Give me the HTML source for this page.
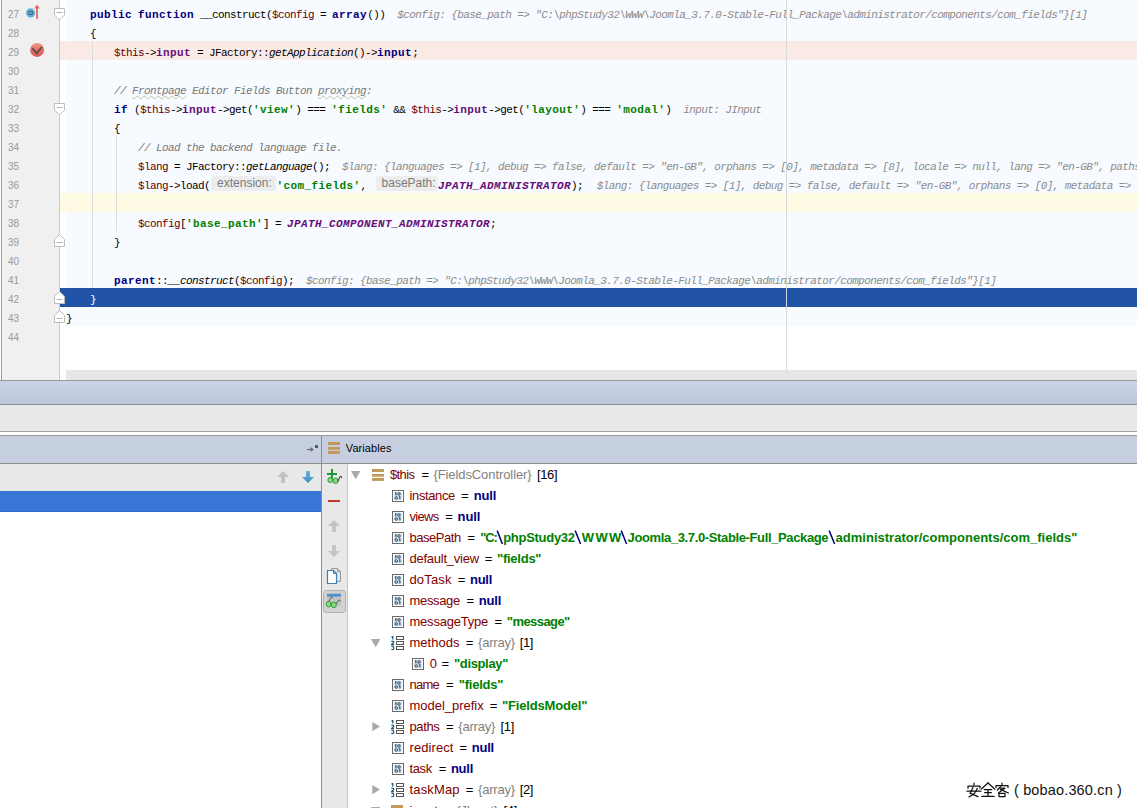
<!DOCTYPE html><html><head><meta charset="utf-8"><title>debug</title><style>
*{margin:0;padding:0;box-sizing:border-box}
html,body{width:1137px;height:808px;overflow:hidden;background:#fff}
body{position:relative;font-family:"Liberation Sans",sans-serif}
.a{position:absolute}
.cl{position:absolute;left:66px;height:19px;line-height:19px;white-space:pre;font-family:"Liberation Mono",monospace;font-size:11.0px;letter-spacing:-0.60px;color:#000}

.k{font-weight:bold;color:#000080;letter-spacing:0.40px}
.v{color:#660000}
.f{font-weight:bold;color:#660e7a;letter-spacing:0.40px}
.s{font-weight:bold;color:#008000;letter-spacing:0.40px}
.c{font-weight:bold;font-style:italic;color:#660e7a;letter-spacing:0.40px}
.m{font-style:italic}
.h{font-style:italic;color:#8c8c8c}
.cm{font-style:italic;color:#787878}
.w{color:#fff}
.ty{text-decoration:underline wavy #b4cca8;text-decoration-thickness:0.8px;text-underline-offset:0.5px;text-decoration-skip-ink:none}
.pbw{display:inline-block;position:relative;height:1px;vertical-align:baseline}
.pb{position:absolute;left:0;top:-12px;height:15px;line-height:15px;background:#ededed;border-radius:3px;font-family:"Liberation Sans",sans-serif;font-size:12px;letter-spacing:0;color:#7a7a7a;overflow:hidden}
.t{position:absolute;white-space:pre}
.nam{color:#800000} .blk{color:#000} .typ{color:#7f7f7f} .nul{color:#000080;font-weight:bold} .str{color:#008000;font-weight:bold} .esc{color:#000080;font-weight:bold}
.ln{position:absolute;left:2px;width:17px;text-align:right;font-size:10px;line-height:19px;height:19px;color:#999}
</style></head><body>
<div class="a" style="left:0;top:0;width:1137px;height:380px;background:#fff"></div>
<div class="a" style="left:1px;top:0;width:1px;height:380px;background:#9a9a9a"></div>
<div class="a" style="left:2px;top:0;width:57px;height:380px;background:#f0f0f0"></div>
<div class="a" style="left:59px;top:0;width:1px;height:380px;background:#c9c9c9"></div>
<div class="a" style="left:66px;top:0;width:1071px;height:326px;background:#f7faff"></div>
<div class="a" style="left:60px;top:41px;width:1077px;height:19px;background:#faeae6"></div>
<div class="a" style="left:60px;top:193px;width:1077px;height:19px;background:#fffae3"></div>
<div class="a" style="left:60px;top:288px;width:1077px;height:19px;background:#2154a6"></div>
<div class="a" style="left:92px;top:41px;width:1px;height:247px;background:#dcdcdc"></div>
<div class="a" style="left:116px;top:136px;width:1px;height:95px;background:#dcdcdc"></div>
<div class="a" style="left:786px;top:0;width:1px;height:380px;background:#dadada"></div>
<div class="a" style="left:786px;top:288px;width:1px;height:19px;background:#ccd5e8"></div>
<div class="a" style="left:66px;top:370px;width:1071px;height:10px;background:#e6e6e6"></div>
<div class="ln" style="top:5px">27</div>
<div class="ln" style="top:24px">28</div>
<div class="ln" style="top:43px">29</div>
<div class="ln" style="top:62px">30</div>
<div class="ln" style="top:81px">31</div>
<div class="ln" style="top:100px">32</div>
<div class="ln" style="top:119px">33</div>
<div class="ln" style="top:138px">34</div>
<div class="ln" style="top:157px">35</div>
<div class="ln" style="top:176px">36</div>
<div class="ln" style="top:195px">37</div>
<div class="ln" style="top:214px">38</div>
<div class="ln" style="top:233px">39</div>
<div class="ln" style="top:252px">40</div>
<div class="ln" style="top:271px">41</div>
<div class="ln" style="top:290px">42</div>
<div class="ln" style="top:309px">43</div>
<div class="ln" style="top:328px">44</div>
<div class="cl" style="top:6px"><span class="p">    </span><span class="k">public</span><span class="p"> </span><span class="k">function</span><span class="p"> __construct(</span><span class="v">$config</span><span class="p"> = </span><span class="k">array</span><span class="p">())  </span><span class="h">$config: {base_path =&gt; "C:\phpStudy32\WWW\Joomla_3.7.0-Stable-Full_Package\administrator/components/com_fields"}[1]</span></div>
<div class="cl" style="top:25px"><span class="p">    {</span></div>
<div class="cl" style="top:44px"><span class="p">        </span><span class="v">$this</span><span class="p">-&gt;</span><span class="f">input</span><span class="p"> = JFactory::</span><span class="m">getApplication</span><span class="p">()-&gt;</span><span class="k">input</span><span class="p">;</span></div>
<div class="cl" style="top:82px"><span class="p">        </span><span class="cm">// </span><span class="cm ty">Frontpage</span><span class="cm"> Editor Fields Button </span><span class="cm ty">proxying</span><span class="cm">:</span></div>
<div class="cl" style="top:101px"><span class="p">        </span><span class="k">if</span><span class="p"> (</span><span class="v">$this</span><span class="p">-&gt;</span><span class="f">input</span><span class="p">-&gt;get(</span><span class="s">'view'</span><span class="p">) === </span><span class="s">'fields'</span><span class="p"> &amp;&amp; </span><span class="v">$this</span><span class="p">-&gt;</span><span class="f">input</span><span class="p">-&gt;get(</span><span class="s">'layout'</span><span class="p">) === </span><span class="s">'modal'</span><span class="p">)  </span><span class="h">input: JInput</span></div>
<div class="cl" style="top:120px"><span class="p">        {</span></div>
<div class="cl" style="top:139px"><span class="p">            </span><span class="cm">// Load the backend language file.</span></div>
<div class="cl" style="top:158px"><span class="p">            </span><span class="v">$lang</span><span class="p"> = JFactory::</span><span class="m">getLanguage</span><span class="p">();  </span><span class="h">$lang: {languages =&gt; [1], debug =&gt; false, default =&gt; "en-GB", orphans =&gt; [0], metadata =&gt; [8], locale =&gt; null, lang =&gt; "en-GB", paths =&gt; [1]</span></div>
<div class="cl" style="top:177px"><span class="p">            </span><span class="v">$lang</span><span class="p">-&gt;load(</span><span style="display:inline-block;width:1px"></span><span class="pbw" style="width:65px"><span class="pb" style="width:65px;padding-left:6px">extension:</span></span><span style="display:inline-block;width:0.5px"></span><span class="s">'com_fields'</span><span class="p">,</span><span style="display:inline-block;width:9px"></span><span class="pbw" style="width:62px"><span class="pb" style="width:62px;padding-left:6px">basePath:</span></span><span style="display:inline-block;width:0.5px"></span><span class="c">JPATH_ADMINISTRATOR</span><span class="p">);  </span><span style="display:inline-block;width:1.5px"></span><span class="h">$lang: {languages =&gt; [1], debug =&gt; false, default =&gt; "en-GB", orphans =&gt; [0], metadata =&gt;</span></div>
<div class="cl" style="top:215px"><span class="p">            </span><span class="v">$config</span><span class="p">[</span><span class="s">'base_path'</span><span class="p">] = </span><span class="c">JPATH_COMPONENT_ADMINISTRATOR</span><span class="p">;</span></div>
<div class="cl" style="top:234px"><span class="p">        }</span></div>
<div class="cl" style="top:272px"><span class="p">        </span><span class="k">parent</span><span class="p">::</span><span class="m">__construct</span><span class="p">(</span><span class="v">$config</span><span class="p">);  </span><span class="h">$config: {base_path =&gt; "C:\phpStudy32\WWW\Joomla_3.7.0-Stable-Full_Package\administrator/components/com_fields"}[1]</span></div>
<div class="cl" style="top:291px"><span class="w">    }</span></div>
<div class="cl" style="top:310px"><span class="p">}</span></div>
<svg class="a" style="left:53px;top:8px" width="13" height="13" viewBox="0 0 13 13"><path d="M1.5 0.5H11.5V7.2L6.5 11.8L1.5 7.2Z" fill="#fff" stroke="#bdbdbd"/><path d="M3.5 4.5H9.5" stroke="#b4b4b4"/></svg><svg class="a" style="left:53px;top:103px" width="13" height="13" viewBox="0 0 13 13"><path d="M1.5 0.5H11.5V7.2L6.5 11.8L1.5 7.2Z" fill="#fff" stroke="#bdbdbd"/><path d="M3.5 4.5H9.5" stroke="#b4b4b4"/></svg><svg class="a" style="left:53px;top:234px" width="13" height="13" viewBox="0 0 13 13"><path d="M1.5 12.5H11.5V5.2L6.5 0.6L1.5 5.2Z" fill="#fff" stroke="#bdbdbd"/><path d="M3.5 8.5H9.5" stroke="#b4b4b4"/></svg><svg class="a" style="left:53px;top:291px" width="13" height="13" viewBox="0 0 13 13"><path d="M1.5 12.5H11.5V5.2L6.5 0.6L1.5 5.2Z" fill="#fff" stroke="#bdbdbd"/><path d="M3.5 8.5H9.5" stroke="#b4b4b4"/></svg><svg class="a" style="left:53px;top:310px" width="13" height="13" viewBox="0 0 13 13"><path d="M1.5 12.5H11.5V5.2L6.5 0.6L1.5 5.2Z" fill="#fff" stroke="#bdbdbd"/><path d="M3.5 8.5H9.5" stroke="#b4b4b4"/></svg><svg class="a" style="left:25px;top:3px" width="17" height="18" viewBox="0 0 17 18"><circle cx="5.6" cy="9.9" r="4.6" fill="#62b0e2"/><circle cx="5.6" cy="9.9" r="1.9" fill="none" stroke="#4b5a68" stroke-width="1.1"/><path d="M12 16V5" stroke="#e0645c" stroke-width="1.7"/><path d="M9.2 5.6L12 1.8L14.8 5.6Z" fill="#e0645c"/></svg><svg class="a" style="left:29px;top:42px" width="16" height="16" viewBox="0 0 16 16"><defs><linearGradient id="bp" x1="0" y1="0" x2="0" y2="1"><stop offset="0" stop-color="#ee9a90"/><stop offset="0.5" stop-color="#e26c60"/><stop offset="1" stop-color="#dc5a50"/></linearGradient></defs><circle cx="8.1" cy="7.9" r="7" fill="url(#bp)"/><path d="M3.2 6.2L7.7 11.3L12.8 5" fill="none" stroke="#4a4a4a" stroke-width="1.5"/></svg>
<div class="a" style="left:0;top:380px;width:1137px;height:1px;background:#9a9a9a"></div>
<div class="a" style="left:0;top:381px;width:1137px;height:23px;background:linear-gradient(#cbd4e5,#bdc7dc)"></div>
<div class="a" style="left:0;top:404px;width:1137px;height:1px;background:#8a8f9c"></div>
<div class="a" style="left:0;top:405px;width:1137px;height:26px;background:#e8e8e8"></div>
<div class="a" style="left:0;top:431px;width:1137px;height:1px;background:#a0a0a0"></div>
<div class="a" style="left:0;top:432px;width:1137px;height:3px;background:#fff"></div>
<div class="a" style="left:0;top:435px;width:1137px;height:1px;background:#9a9a9a"></div>
<div class="a" style="left:0;top:436px;width:1137px;height:27px;background:#c6cfe0"></div>
<div class="a" style="left:0;top:463px;width:1137px;height:1px;background:#8e8e8e"></div>
<div class="a" style="left:0;top:464px;width:321px;height:27px;background:#e8e8e8"></div>
<div class="a" style="left:0;top:491px;width:321px;height:21px;background:#3875d6;border-bottom:1px solid #2d69d0"></div>
<div class="a" style="left:0;top:512px;width:321px;height:296px;background:#fff"></div>
<div class="a" style="left:321px;top:436px;width:1px;height:372px;background:#8e8e8e"></div>
<div class="a" style="left:322px;top:464px;width:25px;height:344px;background:#e8e8e8"></div>
<div class="a" style="left:347px;top:464px;width:1px;height:344px;background:#c4c4c4"></div>
<div class="a" style="left:348px;top:464px;width:789px;height:344px;background:#fff"></div>
<svg class="a" style="left:306px;top:444px" width="13" height="10" viewBox="0 0 13 10"><path d="M1 5.5H6" stroke="#6a6a6a" stroke-width="1.1"/><path d="M4.6 2.9L7.8 5.5L4.6 8.1Z" fill="#6a6a6a"/><rect x="9" y="1" width="3" height="3" fill="#5a5a5a"/></svg>
<svg class="a" style="left:328px;top:442px" width="12" height="12" viewBox="0 0 12 12"><rect x="0" y="0" width="12" height="3" fill="#c3985b"/><rect x="0" y="5" width="12" height="2.7" fill="#c3985b"/><rect x="0" y="8.9" width="12" height="3" fill="#c3985b"/></svg>
<div class="t blk" style="left:345.80px;top:435px;letter-spacing:0.075px;font-size:11px;line-height:27px;height:27px">Variables</div>
<svg class="a" style="left:277px;top:471px" width="12" height="12" viewBox="0 0 12 12"><path d="M6 0L12 6H8V12H4V6H0Z" fill="#c2c2c2"/></svg>
<svg class="a" style="left:302px;top:471px" width="12" height="12" viewBox="0 0 12 12"><defs><linearGradient id="bd" x1="0" y1="0" x2="0" y2="1"><stop offset="0" stop-color="#6fb4da"/><stop offset="1" stop-color="#378fc3"/></linearGradient></defs><path d="M4 0H8V6H12L6 12L0 6H4Z" fill="url(#bd)"/></svg>
<svg class="a" style="left:326px;top:468px" width="18" height="17" viewBox="0 0 18 17"><path d="M1 6H11M6 1V11" stroke="#169a3c" stroke-width="2"/><ellipse cx="4.2" cy="12" rx="2.3" ry="2.7" fill="#8fd88a" stroke="#2f9e38" stroke-width="1"/><ellipse cx="9.6" cy="12.8" rx="2.4" ry="2.8" fill="#8fd88a" stroke="#2f9e38" stroke-width="1"/><path d="M11.9 13.5C13 11 13.6 8.6 14.6 8.3C15.3 8.2 15.6 9.2 15.8 10.2" fill="none" stroke="#444" stroke-width="1.1"/></svg>
<div class="a" style="left:328px;top:500px;width:12px;height:2px;background:#c4392d"></div>
<svg class="a" style="left:328px;top:520px" width="12" height="12" viewBox="0 0 12 12"><path d="M6 0L12 6H8V12H4V6H0Z" fill="#c4c4c4"/></svg>
<svg class="a" style="left:328px;top:545px" width="12" height="12" viewBox="0 0 12 12"><path d="M4 0H8V6H12L6 12L0 6H4Z" fill="#c4c4c4"/></svg>
<svg class="a" style="left:326px;top:567px" width="16" height="18" viewBox="0 0 16 18"><path d="M5.5 1.5H11.5L14.5 4.5V14.5H5.5Z" fill="#e4e4e4" stroke="#9a9a9a"/><path d="M11.5 1.5V4.5H14.5" fill="none" stroke="#9a9a9a"/><path d="M1.5 3.5H7.5L10.5 6.5V16.5H1.5Z" fill="#fff" stroke="#3a7fae" stroke-width="1.2"/><path d="M7.5 3.5V6.5H10.5" fill="none" stroke="#3a7fae"/></svg>
<div class="a" style="left:323px;top:590px;width:23px;height:23px;background:#d2d2d2;border:1px solid #b2b2b2;border-radius:3px"></div>
<svg class="a" style="left:325px;top:593px" width="18" height="16" viewBox="0 0 18 16"><rect x="2" y="0.8" width="14" height="12" fill="#c4c4c4"/><rect x="2" y="0.8" width="14" height="2.8" fill="#4a8fcb"/><ellipse cx="3.6" cy="11.2" rx="2.4" ry="2.8" fill="#8fd88a" stroke="#2f9e38" stroke-width="1"/><ellipse cx="8.8" cy="11.9" rx="2.5" ry="2.8" fill="#8fd88a" stroke="#2f9e38" stroke-width="1"/><path d="M4 8.4C5 6 5.8 4.2 6.6 4.1C7.2 4.1 7.5 4.8 7.7 5.4" fill="none" stroke="#444" stroke-width="0.9"/><path d="M11.2 11C12.4 8.8 13.4 7 14.3 6.9C15 6.9 15.3 7.8 15.5 8.4" fill="none" stroke="#444" stroke-width="0.9"/></svg>
<svg class="a" style="left:392px;top:490px" width="12" height="12" viewBox="0 0 12 12"><rect x="0.5" y="0.5" width="11" height="11" fill="#fff" stroke="#6a6a6a"/><rect x="2.2" y="1.9" width="7.6" height="8.2" fill="#c6e2f7"/><path d="M3.9 2.4V5.4M3 3.2L3.9 2.5" stroke="#3c3c3c" stroke-width="1" fill="none"/><rect x="5.7" y="2.7" width="2.5" height="2.5" rx="1.1" fill="none" stroke="#3c3c3c" stroke-width="0.95"/><rect x="3" y="6.7" width="2.5" height="2.5" rx="1.1" fill="none" stroke="#3c3c3c" stroke-width="0.95"/><path d="M7.9 6.4V9.4M7 7.2L7.9 6.5" stroke="#3c3c3c" stroke-width="1" fill="none"/></svg>
<div class="t nam" style="left:409.50px;top:485px;letter-spacing:-0.368px;font-size:13px;line-height:21px;height:21px">instance</div>
<div class="t blk" style="left:461.20px;top:485px;letter-spacing:0.000px;font-size:13px;line-height:21px;height:21px">=</div>
<div class="t nul" style="left:473.70px;top:485px;letter-spacing:-0.108px;font-size:13px;line-height:21px;height:21px">null</div>
<svg class="a" style="left:392px;top:511px" width="12" height="12" viewBox="0 0 12 12"><rect x="0.5" y="0.5" width="11" height="11" fill="#fff" stroke="#6a6a6a"/><rect x="2.2" y="1.9" width="7.6" height="8.2" fill="#c6e2f7"/><path d="M3.9 2.4V5.4M3 3.2L3.9 2.5" stroke="#3c3c3c" stroke-width="1" fill="none"/><rect x="5.7" y="2.7" width="2.5" height="2.5" rx="1.1" fill="none" stroke="#3c3c3c" stroke-width="0.95"/><rect x="3" y="6.7" width="2.5" height="2.5" rx="1.1" fill="none" stroke="#3c3c3c" stroke-width="0.95"/><path d="M7.9 6.4V9.4M7 7.2L7.9 6.5" stroke="#3c3c3c" stroke-width="1" fill="none"/></svg>
<div class="t nam" style="left:409.50px;top:506px;letter-spacing:-0.700px;font-size:13px;line-height:21px;height:21px">views</div>
<div class="t blk" style="left:445.20px;top:506px;letter-spacing:0.000px;font-size:13px;line-height:21px;height:21px">=</div>
<div class="t nul" style="left:457.60px;top:506px;letter-spacing:-0.108px;font-size:13px;line-height:21px;height:21px">null</div>
<svg class="a" style="left:392px;top:553px" width="12" height="12" viewBox="0 0 12 12"><rect x="0.5" y="0.5" width="11" height="11" fill="#fff" stroke="#6a6a6a"/><rect x="2.2" y="1.9" width="7.6" height="8.2" fill="#c6e2f7"/><path d="M3.9 2.4V5.4M3 3.2L3.9 2.5" stroke="#3c3c3c" stroke-width="1" fill="none"/><rect x="5.7" y="2.7" width="2.5" height="2.5" rx="1.1" fill="none" stroke="#3c3c3c" stroke-width="0.95"/><rect x="3" y="6.7" width="2.5" height="2.5" rx="1.1" fill="none" stroke="#3c3c3c" stroke-width="0.95"/><path d="M7.9 6.4V9.4M7 7.2L7.9 6.5" stroke="#3c3c3c" stroke-width="1" fill="none"/></svg>
<div class="t nam" style="left:409.50px;top:548px;letter-spacing:-0.243px;font-size:13px;line-height:21px;height:21px">default_view</div>
<div class="t blk" style="left:484.80px;top:548px;letter-spacing:0.000px;font-size:13px;line-height:21px;height:21px">=</div>
<div class="t str" style="left:497.00px;top:548px;letter-spacing:-0.250px;font-size:13px;line-height:21px;height:21px">"fields"</div>
<svg class="a" style="left:392px;top:574px" width="12" height="12" viewBox="0 0 12 12"><rect x="0.5" y="0.5" width="11" height="11" fill="#fff" stroke="#6a6a6a"/><rect x="2.2" y="1.9" width="7.6" height="8.2" fill="#c6e2f7"/><path d="M3.9 2.4V5.4M3 3.2L3.9 2.5" stroke="#3c3c3c" stroke-width="1" fill="none"/><rect x="5.7" y="2.7" width="2.5" height="2.5" rx="1.1" fill="none" stroke="#3c3c3c" stroke-width="0.95"/><rect x="3" y="6.7" width="2.5" height="2.5" rx="1.1" fill="none" stroke="#3c3c3c" stroke-width="0.95"/><path d="M7.9 6.4V9.4M7 7.2L7.9 6.5" stroke="#3c3c3c" stroke-width="1" fill="none"/></svg>
<div class="t nam" style="left:409.50px;top:569px;letter-spacing:0.145px;font-size:13px;line-height:21px;height:21px">doTask</div>
<div class="t blk" style="left:457.80px;top:569px;letter-spacing:0.000px;font-size:13px;line-height:21px;height:21px">=</div>
<div class="t nul" style="left:470.00px;top:569px;letter-spacing:-0.275px;font-size:13px;line-height:21px;height:21px">null</div>
<svg class="a" style="left:392px;top:595px" width="12" height="12" viewBox="0 0 12 12"><rect x="0.5" y="0.5" width="11" height="11" fill="#fff" stroke="#6a6a6a"/><rect x="2.2" y="1.9" width="7.6" height="8.2" fill="#c6e2f7"/><path d="M3.9 2.4V5.4M3 3.2L3.9 2.5" stroke="#3c3c3c" stroke-width="1" fill="none"/><rect x="5.7" y="2.7" width="2.5" height="2.5" rx="1.1" fill="none" stroke="#3c3c3c" stroke-width="0.95"/><rect x="3" y="6.7" width="2.5" height="2.5" rx="1.1" fill="none" stroke="#3c3c3c" stroke-width="0.95"/><path d="M7.9 6.4V9.4M7 7.2L7.9 6.5" stroke="#3c3c3c" stroke-width="1" fill="none"/></svg>
<div class="t nam" style="left:409.50px;top:590px;letter-spacing:-0.342px;font-size:13px;line-height:21px;height:21px">message</div>
<div class="t blk" style="left:466.40px;top:590px;letter-spacing:0.000px;font-size:13px;line-height:21px;height:21px">=</div>
<div class="t nul" style="left:478.70px;top:590px;letter-spacing:-0.142px;font-size:13px;line-height:21px;height:21px">null</div>
<svg class="a" style="left:392px;top:616px" width="12" height="12" viewBox="0 0 12 12"><rect x="0.5" y="0.5" width="11" height="11" fill="#fff" stroke="#6a6a6a"/><rect x="2.2" y="1.9" width="7.6" height="8.2" fill="#c6e2f7"/><path d="M3.9 2.4V5.4M3 3.2L3.9 2.5" stroke="#3c3c3c" stroke-width="1" fill="none"/><rect x="5.7" y="2.7" width="2.5" height="2.5" rx="1.1" fill="none" stroke="#3c3c3c" stroke-width="0.95"/><rect x="3" y="6.7" width="2.5" height="2.5" rx="1.1" fill="none" stroke="#3c3c3c" stroke-width="0.95"/><path d="M7.9 6.4V9.4M7 7.2L7.9 6.5" stroke="#3c3c3c" stroke-width="1" fill="none"/></svg>
<div class="t nam" style="left:409.50px;top:611px;letter-spacing:-0.220px;font-size:13px;line-height:21px;height:21px">messageType</div>
<div class="t blk" style="left:494.50px;top:611px;letter-spacing:0.000px;font-size:13px;line-height:21px;height:21px">=</div>
<div class="t str" style="left:506.80px;top:611px;letter-spacing:-0.563px;font-size:13px;line-height:21px;height:21px">"message"</div>
<svg class="a" style="left:391px;top:636px" width="14" height="15" viewBox="0 0 14 15"><rect x="5.5" y="0.5" width="7" height="3" fill="#fff" stroke="#555"/><rect x="5.5" y="5.5" width="7" height="3" fill="#fff" stroke="#555"/><rect x="5.5" y="10.5" width="7" height="3" fill="#fff" stroke="#555"/><path d="M1.8 0V3.6M0.6 1.2L1.8 0.2" stroke="#1a5f8c" stroke-width="1.25" fill="none"/><path d="M0.4 5.6C1.5 4.8 3 5.4 2.6 6.6L0.4 8.6H3" stroke="#1a5f8c" stroke-width="1.25" fill="none"/><path d="M0.4 10.4C1.6 9.7 3 10.4 2.4 11.6C3.4 12.4 2.6 14 0.4 13.4" stroke="#1a5f8c" stroke-width="1.25" fill="none"/></svg>
<div class="t nam" style="left:409.50px;top:632px;letter-spacing:0.021px;font-size:13px;line-height:21px;height:21px">methods</div>
<div class="t blk" style="left:465.70px;top:632px;letter-spacing:0.000px;font-size:13px;line-height:21px;height:21px">=</div>
<div class="t typ" style="left:478.00px;top:632px;letter-spacing:-0.208px;font-size:13px;line-height:21px;height:21px">{array}</div>
<div class="t blk" style="left:519.80px;top:632px;letter-spacing:-0.450px;font-size:13px;line-height:21px;height:21px">[1]</div>
<svg class="a" style="left:392px;top:679px" width="12" height="12" viewBox="0 0 12 12"><rect x="0.5" y="0.5" width="11" height="11" fill="#fff" stroke="#6a6a6a"/><rect x="2.2" y="1.9" width="7.6" height="8.2" fill="#c6e2f7"/><path d="M3.9 2.4V5.4M3 3.2L3.9 2.5" stroke="#3c3c3c" stroke-width="1" fill="none"/><rect x="5.7" y="2.7" width="2.5" height="2.5" rx="1.1" fill="none" stroke="#3c3c3c" stroke-width="0.95"/><rect x="3" y="6.7" width="2.5" height="2.5" rx="1.1" fill="none" stroke="#3c3c3c" stroke-width="0.95"/><path d="M7.9 6.4V9.4M7 7.2L7.9 6.5" stroke="#3c3c3c" stroke-width="1" fill="none"/></svg>
<div class="t nam" style="left:409.50px;top:674px;letter-spacing:-0.733px;font-size:13px;line-height:21px;height:21px">name</div>
<div class="t blk" style="left:446.10px;top:674px;letter-spacing:0.000px;font-size:13px;line-height:21px;height:21px">=</div>
<div class="t str" style="left:458.80px;top:674px;letter-spacing:-0.250px;font-size:13px;line-height:21px;height:21px">"fields"</div>
<svg class="a" style="left:392px;top:700px" width="12" height="12" viewBox="0 0 12 12"><rect x="0.5" y="0.5" width="11" height="11" fill="#fff" stroke="#6a6a6a"/><rect x="2.2" y="1.9" width="7.6" height="8.2" fill="#c6e2f7"/><path d="M3.9 2.4V5.4M3 3.2L3.9 2.5" stroke="#3c3c3c" stroke-width="1" fill="none"/><rect x="5.7" y="2.7" width="2.5" height="2.5" rx="1.1" fill="none" stroke="#3c3c3c" stroke-width="0.95"/><rect x="3" y="6.7" width="2.5" height="2.5" rx="1.1" fill="none" stroke="#3c3c3c" stroke-width="0.95"/><path d="M7.9 6.4V9.4M7 7.2L7.9 6.5" stroke="#3c3c3c" stroke-width="1" fill="none"/></svg>
<div class="t nam" style="left:409.50px;top:695px;letter-spacing:-0.025px;font-size:13px;line-height:21px;height:21px">model_prefix</div>
<div class="t blk" style="left:489.80px;top:695px;letter-spacing:0.000px;font-size:13px;line-height:21px;height:21px">=</div>
<div class="t str" style="left:501.90px;top:695px;letter-spacing:-0.158px;font-size:13px;line-height:21px;height:21px">"FieldsModel"</div>
<svg class="a" style="left:391px;top:720px" width="14" height="15" viewBox="0 0 14 15"><rect x="5.5" y="0.5" width="7" height="3" fill="#fff" stroke="#555"/><rect x="5.5" y="5.5" width="7" height="3" fill="#fff" stroke="#555"/><rect x="5.5" y="10.5" width="7" height="3" fill="#fff" stroke="#555"/><path d="M1.8 0V3.6M0.6 1.2L1.8 0.2" stroke="#1a5f8c" stroke-width="1.25" fill="none"/><path d="M0.4 5.6C1.5 4.8 3 5.4 2.6 6.6L0.4 8.6H3" stroke="#1a5f8c" stroke-width="1.25" fill="none"/><path d="M0.4 10.4C1.6 9.7 3 10.4 2.4 11.6C3.4 12.4 2.6 14 0.4 13.4" stroke="#1a5f8c" stroke-width="1.25" fill="none"/></svg>
<div class="t nam" style="left:409.50px;top:716px;letter-spacing:-0.362px;font-size:13px;line-height:21px;height:21px">paths</div>
<div class="t blk" style="left:446.10px;top:716px;letter-spacing:0.000px;font-size:13px;line-height:21px;height:21px">=</div>
<div class="t typ" style="left:458.30px;top:716px;letter-spacing:-0.225px;font-size:13px;line-height:21px;height:21px">{array}</div>
<div class="t blk" style="left:500.60px;top:716px;letter-spacing:-0.350px;font-size:13px;line-height:21px;height:21px">[1]</div>
<svg class="a" style="left:392px;top:742px" width="12" height="12" viewBox="0 0 12 12"><rect x="0.5" y="0.5" width="11" height="11" fill="#fff" stroke="#6a6a6a"/><rect x="2.2" y="1.9" width="7.6" height="8.2" fill="#c6e2f7"/><path d="M3.9 2.4V5.4M3 3.2L3.9 2.5" stroke="#3c3c3c" stroke-width="1" fill="none"/><rect x="5.7" y="2.7" width="2.5" height="2.5" rx="1.1" fill="none" stroke="#3c3c3c" stroke-width="0.95"/><rect x="3" y="6.7" width="2.5" height="2.5" rx="1.1" fill="none" stroke="#3c3c3c" stroke-width="0.95"/><path d="M7.9 6.4V9.4M7 7.2L7.9 6.5" stroke="#3c3c3c" stroke-width="1" fill="none"/></svg>
<div class="t nam" style="left:409.50px;top:737px;letter-spacing:0.075px;font-size:13px;line-height:21px;height:21px">redirect</div>
<div class="t blk" style="left:459.60px;top:737px;letter-spacing:0.000px;font-size:13px;line-height:21px;height:21px">=</div>
<div class="t nul" style="left:471.80px;top:737px;letter-spacing:-0.242px;font-size:13px;line-height:21px;height:21px">null</div>
<svg class="a" style="left:392px;top:763px" width="12" height="12" viewBox="0 0 12 12"><rect x="0.5" y="0.5" width="11" height="11" fill="#fff" stroke="#6a6a6a"/><rect x="2.2" y="1.9" width="7.6" height="8.2" fill="#c6e2f7"/><path d="M3.9 2.4V5.4M3 3.2L3.9 2.5" stroke="#3c3c3c" stroke-width="1" fill="none"/><rect x="5.7" y="2.7" width="2.5" height="2.5" rx="1.1" fill="none" stroke="#3c3c3c" stroke-width="0.95"/><rect x="3" y="6.7" width="2.5" height="2.5" rx="1.1" fill="none" stroke="#3c3c3c" stroke-width="0.95"/><path d="M7.9 6.4V9.4M7 7.2L7.9 6.5" stroke="#3c3c3c" stroke-width="1" fill="none"/></svg>
<div class="t nam" style="left:409.50px;top:758px;letter-spacing:-0.367px;font-size:13px;line-height:21px;height:21px">task</div>
<div class="t blk" style="left:438.70px;top:758px;letter-spacing:0.000px;font-size:13px;line-height:21px;height:21px">=</div>
<div class="t nul" style="left:450.90px;top:758px;letter-spacing:-0.242px;font-size:13px;line-height:21px;height:21px">null</div>
<svg class="a" style="left:391px;top:783px" width="14" height="15" viewBox="0 0 14 15"><rect x="5.5" y="0.5" width="7" height="3" fill="#fff" stroke="#555"/><rect x="5.5" y="5.5" width="7" height="3" fill="#fff" stroke="#555"/><rect x="5.5" y="10.5" width="7" height="3" fill="#fff" stroke="#555"/><path d="M1.8 0V3.6M0.6 1.2L1.8 0.2" stroke="#1a5f8c" stroke-width="1.25" fill="none"/><path d="M0.4 5.6C1.5 4.8 3 5.4 2.6 6.6L0.4 8.6H3" stroke="#1a5f8c" stroke-width="1.25" fill="none"/><path d="M0.4 10.4C1.6 9.7 3 10.4 2.4 11.6C3.4 12.4 2.6 14 0.4 13.4" stroke="#1a5f8c" stroke-width="1.25" fill="none"/></svg>
<div class="t nam" style="left:409.50px;top:779px;letter-spacing:0.146px;font-size:13px;line-height:21px;height:21px">taskMap</div>
<div class="t blk" style="left:465.70px;top:779px;letter-spacing:0.000px;font-size:13px;line-height:21px;height:21px">=</div>
<div class="t typ" style="left:478.00px;top:779px;letter-spacing:-0.208px;font-size:13px;line-height:21px;height:21px">{array}</div>
<div class="t blk" style="left:519.80px;top:779px;letter-spacing:-0.450px;font-size:13px;line-height:21px;height:21px">[2]</div>
<svg class="a" style="left:351px;top:471px" width="10" height="9" viewBox="0 0 10 9"><path d="M0 0H9.4L4.7 8.2Z" fill="#a9a9a9"/></svg>
<svg class="a" style="left:372px;top:469px" width="12" height="12" viewBox="0 0 12 12"><rect x="0" y="0" width="12" height="3" fill="#c3985b"/><rect x="0" y="5" width="12" height="2.7" fill="#c3985b"/><rect x="0" y="8.9" width="12" height="3" fill="#c3985b"/></svg>
<div class="t nam" style="left:389.90px;top:464px;letter-spacing:-0.600px;font-size:13px;line-height:21px;height:21px">$this</div>
<div class="t blk" style="left:421.50px;top:464px;letter-spacing:0.000px;font-size:13px;line-height:21px;height:21px">=</div>
<div class="t typ" style="left:433.40px;top:464px;letter-spacing:-0.085px;font-size:13px;line-height:21px;height:21px">{FieldsController}</div>
<div class="t blk" style="left:537.00px;top:464px;letter-spacing:-0.375px;font-size:13px;line-height:21px;height:21px">[16]</div>
<svg class="a" style="left:392px;top:532px" width="12" height="12" viewBox="0 0 12 12"><rect x="0.5" y="0.5" width="11" height="11" fill="#fff" stroke="#6a6a6a"/><rect x="2.2" y="1.9" width="7.6" height="8.2" fill="#c6e2f7"/><path d="M3.9 2.4V5.4M3 3.2L3.9 2.5" stroke="#3c3c3c" stroke-width="1" fill="none"/><rect x="5.7" y="2.7" width="2.5" height="2.5" rx="1.1" fill="none" stroke="#3c3c3c" stroke-width="0.95"/><rect x="3" y="6.7" width="2.5" height="2.5" rx="1.1" fill="none" stroke="#3c3c3c" stroke-width="0.95"/><path d="M7.9 6.4V9.4M7 7.2L7.9 6.5" stroke="#3c3c3c" stroke-width="1" fill="none"/></svg>
<div class="t nam" style="left:409.50px;top:527px;letter-spacing:-0.454px;font-size:13px;line-height:21px;height:21px">basePath</div>
<div class="t blk" style="left:467.40px;top:527px;letter-spacing:0.000px;font-size:13px;line-height:21px;height:21px">=</div>
<div class="t str" style="left:480.30px;top:527px;letter-spacing:0.000px;font-size:13px;line-height:21px;height:21px">"</div>
<div class="t str" style="left:485.20px;top:527px;letter-spacing:0.000px;font-size:13px;line-height:21px;height:21px">C</div>
<div class="t str" style="left:493.60px;top:527px;letter-spacing:0.000px;font-size:13px;line-height:21px;height:21px">:</div>
<div class="t str" style="left:503.20px;top:527px;letter-spacing:-0.286px;font-size:13px;line-height:21px;height:21px">phpStudy32</div>
<div class="t str" style="left:581.80px;top:527px;letter-spacing:1.312px;font-size:13px;line-height:21px;height:21px">WWW</div>
<div class="t str" style="left:627.60px;top:527px;letter-spacing:-0.370px;font-size:13px;line-height:21px;height:21px">Joomla_3.7.0-Stable-Full_Package</div>
<div class="t str" style="left:835.60px;top:527px;letter-spacing:0.005px;font-size:13px;line-height:21px;height:21px">administrator/components/com_fields"</div>
<svg class="a" style="left:495.8px;top:529px" width="7.6" height="19" viewBox="0 0 7.6 19"><path d="M1.2 1.6L6.4 15" stroke="#000080" stroke-width="1.5"/></svg>
<svg class="a" style="left:574.4px;top:529px" width="7.8" height="19" viewBox="0 0 7.8 19"><path d="M1.2 1.6L6.6 15" stroke="#000080" stroke-width="1.5"/></svg>
<svg class="a" style="left:620.2px;top:529px" width="7.8" height="19" viewBox="0 0 7.8 19"><path d="M1.2 1.6L6.6 15" stroke="#000080" stroke-width="1.5"/></svg>
<svg class="a" style="left:828.2px;top:529px" width="7.8" height="19" viewBox="0 0 7.8 19"><path d="M1.2 1.6L6.6 15" stroke="#000080" stroke-width="1.5"/></svg>
<svg class="a" style="left:371px;top:639px" width="10" height="9" viewBox="0 0 10 9"><path d="M0 0H9.4L4.7 8.2Z" fill="#a9a9a9"/></svg>
<svg class="a" style="left:372px;top:722px" width="9" height="10" viewBox="0 0 9 10"><path d="M0.3 0L8 4.6L0.3 9.2Z" fill="#a9a9a9"/></svg>
<svg class="a" style="left:372px;top:785px" width="9" height="10" viewBox="0 0 9 10"><path d="M0.3 0L8 4.6L0.3 9.2Z" fill="#a9a9a9"/></svg>
<svg class="a" style="left:412px;top:658px" width="12" height="12" viewBox="0 0 12 12"><rect x="0.5" y="0.5" width="11" height="11" fill="#fff" stroke="#6a6a6a"/><rect x="2.2" y="1.9" width="7.6" height="8.2" fill="#c6e2f7"/><path d="M3.9 2.4V5.4M3 3.2L3.9 2.5" stroke="#3c3c3c" stroke-width="1" fill="none"/><rect x="5.7" y="2.7" width="2.5" height="2.5" rx="1.1" fill="none" stroke="#3c3c3c" stroke-width="0.95"/><rect x="3" y="6.7" width="2.5" height="2.5" rx="1.1" fill="none" stroke="#3c3c3c" stroke-width="0.95"/><path d="M7.9 6.4V9.4M7 7.2L7.9 6.5" stroke="#3c3c3c" stroke-width="1" fill="none"/></svg>
<div class="t nam" style="left:429.80px;top:653px;letter-spacing:0.000px;font-size:13px;line-height:21px;height:21px">0</div>
<div class="t blk" style="left:441.50px;top:653px;letter-spacing:0.000px;font-size:13px;line-height:21px;height:21px">=</div>
<div class="t str" style="left:454.00px;top:653px;letter-spacing:-0.353px;font-size:13px;line-height:21px;height:21px">"display"</div>
<svg class="a" style="left:371px;top:807px" width="10" height="9" viewBox="0 0 10 9"><path d="M0 0H9.4L4.7 8.2Z" fill="#a9a9a9"/></svg>
<svg class="a" style="left:391px;top:805px" width="12" height="12" viewBox="0 0 12 12"><rect x="0" y="0" width="12" height="3" fill="#c3985b"/><rect x="0" y="5" width="12" height="2.7" fill="#c3985b"/><rect x="0" y="8.9" width="12" height="3" fill="#c3985b"/></svg>
<div class="t nam" style="left:409.50px;top:800px;letter-spacing:0.062px;font-size:13px;line-height:21px;height:21px">input</div>
<div class="t blk" style="left:444.20px;top:800px;letter-spacing:0.000px;font-size:13px;line-height:21px;height:21px">=</div>
<div class="t typ" style="left:456.50px;top:800px;letter-spacing:-0.375px;font-size:13px;line-height:21px;height:21px">{JInput}</div>
<div class="t blk" style="left:503.50px;top:800px;letter-spacing:-0.350px;font-size:13px;line-height:21px;height:21px">[4]</div>
<svg class="a" style="left:966px;top:782px" width="16" height="17" viewBox="-1 -1 16 17"><path d="M7 0V2" fill="none" stroke="#fff" stroke-width="2.6" stroke-linecap="round" stroke-linejoin="round"/><path d="M1 5.2V3H13V5.2" fill="none" stroke="#fff" stroke-width="2.6" stroke-linecap="round" stroke-linejoin="round"/><path d="M6 4.5L3 10.2L11 13.6" fill="none" stroke="#fff" stroke-width="2.6" stroke-linecap="round" stroke-linejoin="round"/><path d="M10.2 5.4C9 9.5 6.5 12 2 13.8" fill="none" stroke="#fff" stroke-width="2.6" stroke-linecap="round" stroke-linejoin="round"/><path d="M0 8.2H14" fill="none" stroke="#fff" stroke-width="2.6" stroke-linecap="round" stroke-linejoin="round"/><path d="M7 0V2" fill="none" stroke="#111" stroke-width="1.25" stroke-linecap="round" stroke-linejoin="round"/><path d="M1 5.2V3H13V5.2" fill="none" stroke="#111" stroke-width="1.25" stroke-linecap="round" stroke-linejoin="round"/><path d="M6 4.5L3 10.2L11 13.6" fill="none" stroke="#111" stroke-width="1.25" stroke-linecap="round" stroke-linejoin="round"/><path d="M10.2 5.4C9 9.5 6.5 12 2 13.8" fill="none" stroke="#111" stroke-width="1.25" stroke-linecap="round" stroke-linejoin="round"/><path d="M0 8.2H14" fill="none" stroke="#111" stroke-width="1.25" stroke-linecap="round" stroke-linejoin="round"/></svg><svg class="a" style="left:980px;top:782px" width="16" height="17" viewBox="-1 -1 16 17"><path d="M7 0L0 6.2" fill="none" stroke="#fff" stroke-width="2.6" stroke-linecap="round" stroke-linejoin="round"/><path d="M7 0L14 6.2" fill="none" stroke="#fff" stroke-width="2.6" stroke-linecap="round" stroke-linejoin="round"/><path d="M3.2 6.6H10.8" fill="none" stroke="#fff" stroke-width="2.6" stroke-linecap="round" stroke-linejoin="round"/><path d="M3.6 9.6H10.4" fill="none" stroke="#fff" stroke-width="2.6" stroke-linecap="round" stroke-linejoin="round"/><path d="M0.8 13.4H13.2" fill="none" stroke="#fff" stroke-width="2.6" stroke-linecap="round" stroke-linejoin="round"/><path d="M7 6.6V13.4" fill="none" stroke="#fff" stroke-width="2.6" stroke-linecap="round" stroke-linejoin="round"/><path d="M7 0L0 6.2" fill="none" stroke="#111" stroke-width="1.25" stroke-linecap="round" stroke-linejoin="round"/><path d="M7 0L14 6.2" fill="none" stroke="#111" stroke-width="1.25" stroke-linecap="round" stroke-linejoin="round"/><path d="M3.2 6.6H10.8" fill="none" stroke="#111" stroke-width="1.25" stroke-linecap="round" stroke-linejoin="round"/><path d="M3.6 9.6H10.4" fill="none" stroke="#111" stroke-width="1.25" stroke-linecap="round" stroke-linejoin="round"/><path d="M0.8 13.4H13.2" fill="none" stroke="#111" stroke-width="1.25" stroke-linecap="round" stroke-linejoin="round"/><path d="M7 6.6V13.4" fill="none" stroke="#111" stroke-width="1.25" stroke-linecap="round" stroke-linejoin="round"/></svg><svg class="a" style="left:994px;top:782px" width="16" height="17" viewBox="-1 -1 16 17"><path d="M7 0V1.8" fill="none" stroke="#fff" stroke-width="2.6" stroke-linecap="round" stroke-linejoin="round"/><path d="M1 4.6V2.6H13V4.6" fill="none" stroke="#fff" stroke-width="2.6" stroke-linecap="round" stroke-linejoin="round"/><path d="M5.6 3.6L2.4 7" fill="none" stroke="#fff" stroke-width="2.6" stroke-linecap="round" stroke-linejoin="round"/><path d="M5 5H10L3.4 10" fill="none" stroke="#fff" stroke-width="2.6" stroke-linecap="round" stroke-linejoin="round"/><path d="M5.4 6.4L13.4 10" fill="none" stroke="#fff" stroke-width="2.6" stroke-linecap="round" stroke-linejoin="round"/><path d="M4 10.4H10V13.6H4Z" fill="none" stroke="#fff" stroke-width="2.6" stroke-linecap="round" stroke-linejoin="round"/><path d="M7 0V1.8" fill="none" stroke="#111" stroke-width="1.25" stroke-linecap="round" stroke-linejoin="round"/><path d="M1 4.6V2.6H13V4.6" fill="none" stroke="#111" stroke-width="1.25" stroke-linecap="round" stroke-linejoin="round"/><path d="M5.6 3.6L2.4 7" fill="none" stroke="#111" stroke-width="1.25" stroke-linecap="round" stroke-linejoin="round"/><path d="M5 5H10L3.4 10" fill="none" stroke="#111" stroke-width="1.25" stroke-linecap="round" stroke-linejoin="round"/><path d="M5.4 6.4L13.4 10" fill="none" stroke="#111" stroke-width="1.25" stroke-linecap="round" stroke-linejoin="round"/><path d="M4 10.4H10V13.6H4Z" fill="none" stroke="#111" stroke-width="1.25" stroke-linecap="round" stroke-linejoin="round"/></svg><div class="a" style="left:1014px;top:780px;font-size:14.5px;line-height:20px;white-space:pre;color:#111;letter-spacing:0.15px;text-shadow:1px 1px 0 #fff,-1px -1px 0 #fff,1px -1px 0 #fff,-1px 1px 0 #fff,0 1px 0 #fff,0 -1px 0 #fff">( bobao.360.cn )</div>
</body></html>
